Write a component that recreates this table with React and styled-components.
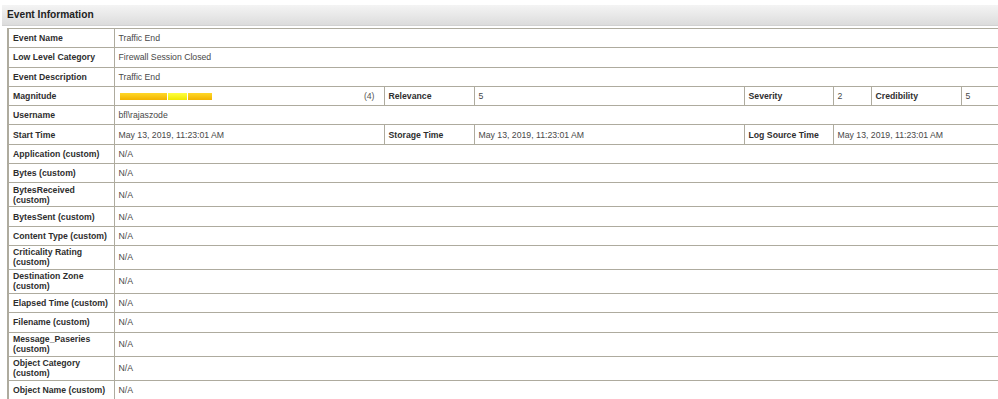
import React from "react";
import styled, { createGlobalStyle } from "styled-components";

const GlobalStyle = createGlobalStyle`
  html, body {
    margin: 0;
    padding: 0;
    background: #ffffff;
    overflow: hidden;
  }
  body {
    font-family: "Liberation Sans", Arial, sans-serif;
  }
`;

const customFields = [
  "Application (custom)",
  "Bytes (custom)",
  "BytesReceived (custom)",
  "BytesSent (custom)",
  "Content Type (custom)",
  "Criticality Rating (custom)",
  "Destination Zone (custom)",
  "Elapsed Time (custom)",
  "Filename (custom)",
  "Message_Paseries (custom)",
  "Object Category (custom)",
  "Object Name (custom)",
];

// column widths of the detail grid, last one runs off the panel edge
const columns = [106, 270, 90, 270, 89, 38, 90, 80];

const App = () => {
  return (
    <>
      <GlobalStyle />
      <Page>
        <SectionHeader>Event Information</SectionHeader>
        <InfoTable>
          <colgroup>
            {columns.map((w, i) => (
              <col key={i} style={{ width: w }} />
            ))}
          </colgroup>
          <tbody>
            <Row>
              <Label>Event Name</Label>
              <Value colSpan={7}>Traffic End</Value>
            </Row>
            <Row>
              <Label>Low Level Category</Label>
              <Value colSpan={7}>Firewall Session Closed</Value>
            </Row>
            <Row>
              <Label>Event Description</Label>
              <Value colSpan={7}>Traffic End</Value>
            </Row>
            <Row>
              <Label>Magnitude</Label>
              <Value>
                <MagnitudeCell>
                  <MagnitudeBar>
                    <BarSegment $width={47} />
                    <BarSegment $width={19} $bright />
                    <BarSegment $width={24} />
                  </MagnitudeBar>
                  <Score>(4)</Score>
                </MagnitudeCell>
              </Value>
              <Label>Relevance</Label>
              <Value>5</Value>
              <Label>Severity</Label>
              <Value>2</Value>
              <Label>Credibility</Label>
              <Value>5</Value>
            </Row>
            <Row>
              <Label>Username</Label>
              <Value colSpan={7}>bfl\rajaszode</Value>
            </Row>
            <Row>
              <Label>Start Time</Label>
              <Value>May 13, 2019, 11:23:01 AM</Value>
              <Label>Storage Time</Label>
              <Value>May 13, 2019, 11:23:01 AM</Value>
              <Label>Log Source Time</Label>
              <Value colSpan={3}>May 13, 2019, 11:23:01 AM</Value>
            </Row>
            {customFields.map((field) => (
              <Row key={field}>
                <Label>{field}</Label>
                <Value colSpan={7}>N/A</Value>
              </Row>
            ))}
          </tbody>
        </InfoTable>
      </Page>
    </>
  );
};

const Page = styled.div`
  padding: 5px 0 0 2px;
  width: 1040px;
`;

const SectionHeader = styled.div`
  height: 20px;
  line-height: 20px;
  padding-left: 5px;
  font-size: 10.2px;
  font-weight: bold;
  color: #222;
  background: linear-gradient(to bottom, #f4f4f4 0%, #e6e6e6 60%, #dcdcdc 100%);
  border-bottom: 1px solid #d2d2d2;
`;

const InfoTable = styled.table`
  margin: 2px 0 0 5px;
  width: 1033px;
  table-layout: fixed;
  border-collapse: collapse;
  border-left: 2px solid #aeab9e;
  font-size: 8.7px;
`;

const Row = styled.tr`
  height: 19.3px;
`;

const Cell = styled.td`
  border: 1px solid #aeab9e;
  padding: 1.5px 5px;
  line-height: 10px;
  vertical-align: middle;
`;

const Label = styled(Cell)`
  padding: 1.5px 1px 1.5px 4px;
  font-weight: bold;
  color: #2e2e2e;
`;

const Value = styled(Cell)`
  color: #484848;
  padding-left: 4px;
`;

const MagnitudeCell = styled.div`
  display: flex;
  align-items: center;
  justify-content: space-between;
  padding: 0 4px 0 1px;
`;

const MagnitudeBar = styled.div`
  display: flex;
  gap: 1px;
  height: 7px;
`;

const BarSegment = styled.span`
  display: block;
  width: ${(p) => p.$width}px;
  height: 100%;
  background: ${(p) =>
    p.$bright
      ? "linear-gradient(to bottom, #ffff40, #f0e800)"
      : "linear-gradient(to bottom, #ffd828, #f2b300)"};
`;

const Score = styled.span`
  color: #555;
`;

export default App;
